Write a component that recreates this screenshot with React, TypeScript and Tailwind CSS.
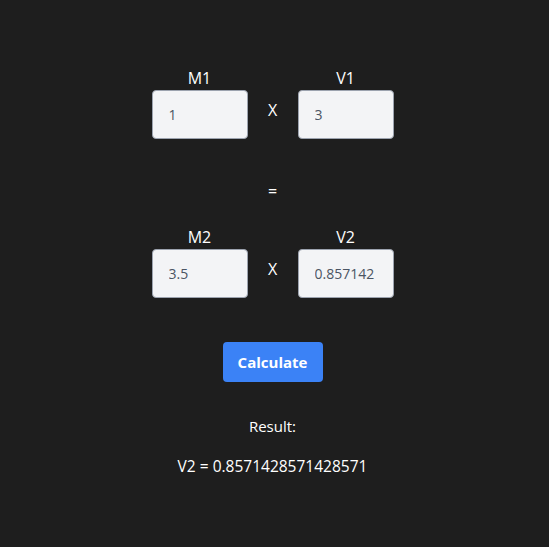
import React, { useState } from "react";

export default function App() {
  const [m1, setM1] = useState("1");
  const [v1, setV1] = useState("3");
  const [m2, setM2] = useState("3.5");
  const [v2, setV2] = useState("0.857142");
  const [result] = useState("0.8571428571428571");

  const inputCls =
    "w-[96px] h-[49px] rounded-[4px] border border-[#9ca3af] bg-[#f3f4f6] px-[16px] text-[14px] text-[#4b5563] outline-none";

  const Field = ({ label, value, onChange }: { label: string; value: string; onChange: (s: string) => void }) => (
    <div className="flex flex-col items-center">
      <div className="h-[24px] text-[16px] leading-[24px] text-white">{label}</div>
      <input className={inputCls} value={value} onChange={(e) => onChange(e.target.value)} />
    </div>
  );

  return (
    <div
      className="min-h-[547px] w-full bg-[#1e1e1e] flex flex-col items-center pt-[66px] pr-[4px] text-white"
      style={{ fontFamily: '"Open Sans", "Noto Sans", sans-serif' }}
    >
      <div className="flex items-center gap-[19px]">
        <Field label="M1" value={m1} onChange={setM1} />
        <div className="w-[12px] text-center text-[16px] leading-[24px] mt-[14px]">X</div>
        <Field label="V1" value={v1} onChange={setV1} />
      </div>
      <div className="mt-[40px] text-[16px] leading-[24px]">=</div>
      <div className="mt-[22px] flex items-center gap-[19px]">
        <Field label="M2" value={m2} onChange={setM2} />
        <div className="w-[12px] text-center text-[16px] leading-[24px] mt-[14px]">X</div>
        <Field label="V2" value={v2} onChange={setV2} />
      </div>
      <button className="mt-[44px] w-[100px] h-[40px] rounded-[4px] bg-[#3b82f6] text-white font-bold text-[15px]">
        Calculate
      </button>
      <div className="mt-[32px] text-[15px] leading-[24px]">Result:</div>
      <div className="mt-[16px] text-[15.5px] leading-[24px]">V2 = {result}</div>
    </div>
  );
}
